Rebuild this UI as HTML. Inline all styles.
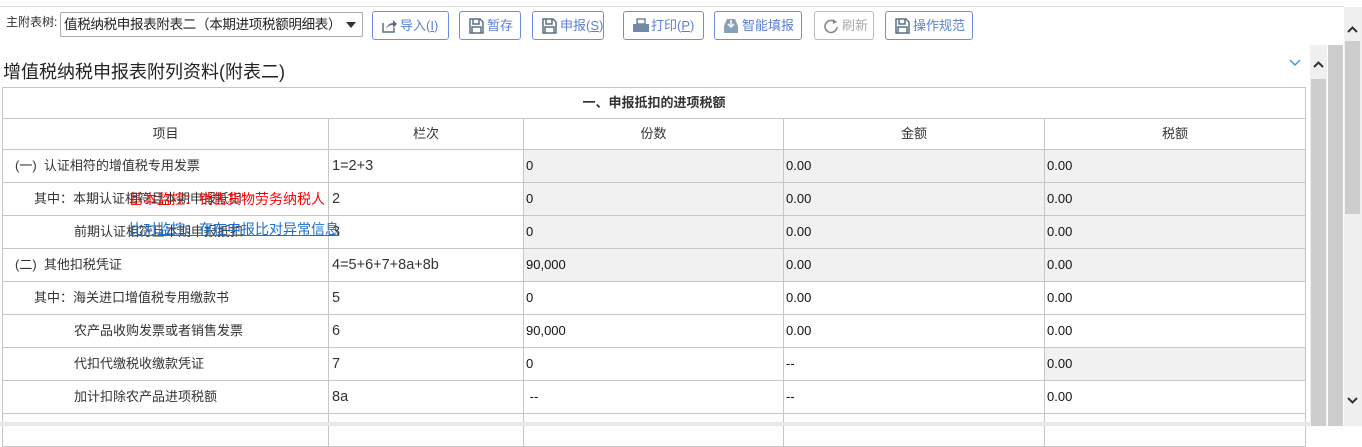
<!DOCTYPE html>
<html><head><meta charset="utf-8"><style>
*{box-sizing:border-box;margin:0;padding:0}
body{width:1362px;height:426px;overflow:hidden;background:#fff;font-family:"Liberation Sans","Noto Sans CJK SC",sans-serif;position:relative;color:#333}
.abs{position:absolute}
.topline{left:0;top:6px;width:1344px;height:1px;background:#ddd}
.lbl{left:6px;top:13px;font-size:12px;color:#333}
.sel{left:60px;top:12px;width:303px;height:25px;border:1px solid #aaa;border-radius:2px;font-size:13.5px;line-height:23px;padding-left:3px;color:#222;white-space:nowrap;overflow:hidden;letter-spacing:-0.3px}
.sel:after{content:"";position:absolute;right:6px;top:9px;border-left:5px solid transparent;border-right:5px solid transparent;border-top:6px solid #333}
.btn{top:11px;height:29px;border:1px solid #6d8fe0;border-radius:3px;font-size:13px;color:#5b7fd6;line-height:27px;padding-left:27px;white-space:nowrap;overflow:hidden}
.btn svg{position:absolute;left:8px;top:6px}
.btn.dis{border-color:#bbb;color:#aaa}
.title{left:3px;top:58px;font-size:18px;color:#222}
table{position:absolute;left:2px;top:87px;border-collapse:collapse;font-size:13px;table-layout:fixed}
td{border:1px solid #c6c6c6;height:33px;padding:0 3px;color:#333;white-space:nowrap;overflow:hidden;vertical-align:middle;line-height:16px}
td.c{font-size:14.5px}
td.g{background:#f1f1f1}
td.n{font-family:"Liberation Sans Narrow","Liberation Sans",sans-serif;font-size:13px;color:#111;padding-left:2px}
.hd td{text-align:center;height:31px}
</style></head><body>
<div class="abs topline"></div>
<div class="abs lbl">主附表树:</div>
<div class="abs sel">值税纳税申报表附表二（本期进项税额明细表）</div>
<div class="abs btn" style="left:372px;width:77px"><svg width="16" height="16"><path d="M2 5v9h11v-4" fill="none" stroke="#5a6f86" stroke-width="1.5"/><path d="M5 11c1-4 4-6 7-6V2l4 4-4 4V7c-3 0-5 1-7 4z" fill="#5a6f86"/></svg>导入(<u>I</u>)</div>
<div class="abs btn" style="left:459px;width:62px"><svg width="16" height="16"><path d="M2 1h10l3 3v11H2z M5 1v5h6V1 M4 15V9h9v6" fill="none" stroke="#5a6f86" stroke-width="1.5"/></svg>暂存</div>
<div class="abs btn" style="left:532px;width:72px"><svg width="16" height="16"><path d="M2 1h10l3 3v11H2z M5 1v5h6V1 M4 15V9h9v6" fill="none" stroke="#5a6f86" stroke-width="1.5"/></svg>申报(<u>S</u>)</div>
<div class="abs btn" style="left:623px;width:81px"><svg width="18" height="16"><rect x="5" y="1" width="8" height="5" fill="none" stroke="#5a6f86" stroke-width="1.3"/><rect x="1" y="6" width="16" height="8" fill="#6f8aa5"/></svg>打印(<u>P</u>)</div>
<div class="abs btn" style="left:714px;width:88px"><svg width="16" height="16"><path d="M1 8v7h14V8l-3-7H4z" fill="#8aa0b8"/><path d="M8 2v7M5 6l3 3 3-3" stroke="#fff" stroke-width="1.5" fill="none"/></svg>智能填报</div>
<div class="abs btn dis" style="left:814px;width:60px"><svg width="16" height="16"><path d="M12 4a6 6 0 1 0 2 5" fill="none" stroke="#888" stroke-width="1.6"/><path d="M10 1l4 3-4 2z" fill="#888"/></svg>刷新</div>
<div class="abs btn" style="left:885px;width:88px"><svg width="16" height="16"><path d="M2 1h10l3 3v11H2z M5 1v5h6V1 M4 15V9h9v6" fill="none" stroke="#5a6f86" stroke-width="1.5"/></svg>操作规范</div>
<div class="abs title">增值税纳税申报表附列资料(附表二)</div>
<svg class="abs" style="left:1289px;top:59px" width="12" height="8"><path d="M1 1l5 5 5-5" stroke="#3b9be8" stroke-width="1.5" fill="none"/></svg>
<table>
<colgroup><col style="width:326px"><col style="width:195px"><col style="width:260px"><col style="width:261px"><col style="width:261px"></colgroup>
<tr class="hd"><td colspan="5" style="font-weight:bold">一、申报抵扣的进项税额</td></tr>
<tr class="hd"><td style="height:29px">项目</td><td>栏次</td><td>份数</td><td>金额</td><td>税额</td></tr>
<tr><td style="padding-left:12px">(一)&nbsp; 认证相符的增值税专用发票</td><td class="c">1=2+3</td><td class="g n">0</td><td class="g n">0.00</td><td class="g n">0.00</td></tr>
<tr><td style="padding-left:31px">其中：本期认证相符且本期申报抵扣</td><td class="c">2</td><td class="g n">0</td><td class="g n">0.00</td><td class="g n">0.00</td></tr>
<tr><td style="padding-left:71px">前期认证相符且本期申报抵扣</td><td class="c">3</td><td class="g n">0</td><td class="g n">0.00</td><td class="g n">0.00</td></tr>
<tr><td style="padding-left:12px">(二)&nbsp; 其他扣税凭证</td><td class="c">4=5+6+7+8a+8b</td><td class="g n">90,000</td><td class="g n">0.00</td><td class="g n">0.00</td></tr>
<tr><td style="padding-left:31px">其中：海关进口增值税专用缴款书</td><td class="c">5</td><td class="n">0</td><td class="n">0.00</td><td class="n">0.00</td></tr>
<tr><td style="padding-left:71px">农产品收购发票或者销售发票</td><td class="c">6</td><td class="n">90,000</td><td class="n">0.00</td><td class="n">0.00</td></tr>
<tr><td style="padding-left:71px">代扣代缴税收缴款凭证</td><td class="c">7</td><td class="n">0</td><td class="n">--</td><td class="g n">0.00</td></tr>
<tr><td style="padding-left:71px">加计扣除农产品进项税额</td><td class="c">8a</td><td class="n">&nbsp;--</td><td class="n">--</td><td class="n">0.00</td></tr>
<tr><td></td><td></td><td class="n"></td><td class="n"></td><td class="n"></td></tr>
</table>
<div class="abs" style="left:129px;top:189px;font-size:14px;color:#f00">基本监控：销售货物劳务纳税人</div>
<div class="abs" style="left:129px;top:219px;font-size:14px;color:#1a6fd0;text-decoration:underline">比对监控：存在申报比对异常信息</div>
<div class="abs" style="left:0;top:422px;width:1310px;height:4px;background:#e8e8e8"></div>
<div class="abs" style="left:1310px;top:45px;width:17px;height:381px;background:#f0f0f0"></div>
<div class="abs" style="left:1311px;top:79px;width:15px;height:347px;background:#cdcdcd"></div>
<svg class="abs" style="left:1313px;top:61px" width="11" height="7"><path d="M1 6l4.5-4.5L10 6" stroke="#333" stroke-width="2" fill="none"/></svg>
<div class="abs" style="left:1328px;top:45px;width:15px;height:381px;background:#cdcdcd"></div>
<div class="abs" style="left:1344px;top:7px;width:18px;height:419px;background:#f0f0f0"></div>
<div class="abs" style="left:1345px;top:41px;width:15px;height:173px;background:#cdcdcd"></div>
<svg class="abs" style="left:1347px;top:26px" width="11" height="7"><path d="M1 6l4.5-4.5L10 6" stroke="#333" stroke-width="2" fill="none"/></svg>
<svg class="abs" style="left:1347px;top:397px" width="11" height="7"><path d="M1 1l4.5 4.5L10 1" stroke="#333" stroke-width="2" fill="none"/></svg>
</body></html>
